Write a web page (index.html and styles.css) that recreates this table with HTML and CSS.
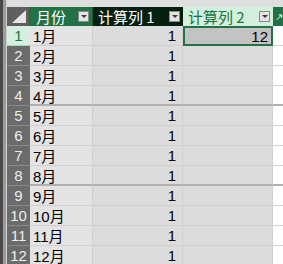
FILE: index.html
```html
<!DOCTYPE html>
<html>
<head>
<meta charset="utf-8">
<link rel="stylesheet" href="styles.css">
</head>
<body>
<div class="app">
  <div class="edge"></div>
  <div class="main">
    <div class="topbar"></div>
    <div class="sheet">
      <div class="corner"><span class="tri"></span></div>
      <div class="hd hd-a"><span>月份</span><span class="dd"></span></div>
      <div class="hd hd-b"><span>计算列 1</span><span class="dd"></span></div>
      <div class="hd hd-c"><span>计算列 2</span><span class="dd"></span></div>
      <div class="hd hd-d"><svg width="10" height="10" viewBox="0 0 10 10"><path d="M1 9 L8 2 M4 2 H8 V6" fill="none" stroke="#fff" stroke-width="1.4"/></svg></div>

      <div class="rh rh-sel">1</div><div class="c ca">1月</div><div class="c cb">1</div><div class="c cc sel">12</div><div class="c cd"></div>
      <div class="rh">2</div><div class="c ca">2月</div><div class="c cb">1</div><div class="c cc"></div><div class="c cd"></div>
      <div class="rh">3</div><div class="c ca">3月</div><div class="c cb">1</div><div class="c cc"></div><div class="c cd"></div>
      <div class="rh">4</div><div class="c ca sep">4月</div><div class="c cb sep">1</div><div class="c cc sep"></div><div class="c cd sep"></div>
      <div class="rh">5</div><div class="c ca">5月</div><div class="c cb">1</div><div class="c cc"></div><div class="c cd"></div>
      <div class="rh">6</div><div class="c ca">6月</div><div class="c cb">1</div><div class="c cc"></div><div class="c cd"></div>
      <div class="rh">7</div><div class="c ca">7月</div><div class="c cb">1</div><div class="c cc"></div><div class="c cd"></div>
      <div class="rh">8</div><div class="c ca sep">8月</div><div class="c cb sep">1</div><div class="c cc sep"></div><div class="c cd sep"></div>
      <div class="rh">9</div><div class="c ca">9月</div><div class="c cb">1</div><div class="c cc"></div><div class="c cd"></div>
      <div class="rh">10</div><div class="c ca">10月</div><div class="c cb">1</div><div class="c cc"></div><div class="c cd"></div>
      <div class="rh">11</div><div class="c ca">11月</div><div class="c cb">1</div><div class="c cc"></div><div class="c cd"></div>
      <div class="rh">12</div><div class="c ca">12月</div><div class="c cb">1</div><div class="c cc"></div><div class="c cd"></div>
    </div>
  </div>
</div>
</body>
</html>
```
FILE: styles.css
```css
html, body {
  margin: 0;
  padding: 0;
  background: #ffffff;
  overflow: hidden;
}
.app {
  display: flex;
  width: 283px;
  height: 264px;
  overflow: hidden;
  font-family: "Liberation Sans", "Noto Sans CJK SC", sans-serif;
}
.edge {
  width: 7px;
  flex: none;
  background: linear-gradient(to right, #4a4a4a 0 3px, #9c9c9c 3px 6px, #cfcfcf 6px 7px);
}
.main {
  flex: 1;
  display: flex;
  flex-direction: column;
  min-width: 0;
}
.topbar {
  height: 7px;
  flex: none;
  background: #dedede;
}
.sheet {
  display: grid;
  grid-template-columns: 23px 63px 90px 90px 1fr;
  grid-template-rows: 19px;
  grid-auto-rows: 20px;
}
.corner {
  background: #5f5f5f;
  position: relative;
  border-right: 1px solid #4d4d4d;
}
.tri {
  position: absolute;
  right: 3px;
  bottom: 3px;
  width: 0;
  height: 0;
  border-left: 14px solid transparent;
  border-bottom: 13px solid #e6e6e6;
}
.hd {
  display: flex;
  align-items: center;
  justify-content: space-between;
  padding: 0 3px 0 5px;
  font-size: 15px;
  font-family: "Noto Sans CJK SC", "Liberation Sans", sans-serif;
  white-space: nowrap;
  overflow: hidden;
}
.hd-a {
  background: #217346;
  color: #ffffff;
  padding-left: 6px;
  border-right: 1px solid #1a5c38;
}
.hd-b {
  background: #06200f;
  color: #ffffff;
}
.hd-c {
  background: #d3f0dd;
  color: #217346;
}
.hd-d {
  background: #217346;
  padding: 0 0 0 3px;
  justify-content: flex-start;
}
.dd {
  width: 11px;
  height: 11px;
  box-sizing: border-box;
  border: 1px solid #8a8a8a;
  background: #e4e4e4;
  position: relative;
  flex: none;
}
.dd::after {
  content: "";
  position: absolute;
  left: 2px;
  top: 3px;
  border-left: 3px solid transparent;
  border-right: 3px solid transparent;
  border-top: 3px solid #3a3a3a;
}
.rh {
  background: #6b6b6b;
  color: #eeeeee;
  font-size: 15px;
  display: flex;
  align-items: center;
  justify-content: center;
  box-sizing: border-box;
  border-bottom: 1px solid #8a8a8a;
}
.rh-sel {
  background: #d3f0e0;
  color: #217346;
  border-bottom-color: #a9d8bd;
}
.c {
  box-sizing: border-box;
  border-bottom: 1px solid #d0d0d0;
  border-right: 1px solid #d0d0d0;
  display: flex;
  align-items: center;
  font-size: 15px;
  color: #000000;
  white-space: nowrap;
}
.ca {
  background: #e4e4e4;
  padding-left: 3px;
}
.cb, .cc {
  background: #dcdcdc;
  justify-content: flex-end;
  padding-right: 6px;
}
.cd {
  background: #ffffff;
  border-right: none;
}
.sep {
  border-bottom: 2px solid #b0b0b0;
}
.sel {
  background: #c3c3c3;
  border: 2px solid #217346;
  padding-right: 3px;
}
```
